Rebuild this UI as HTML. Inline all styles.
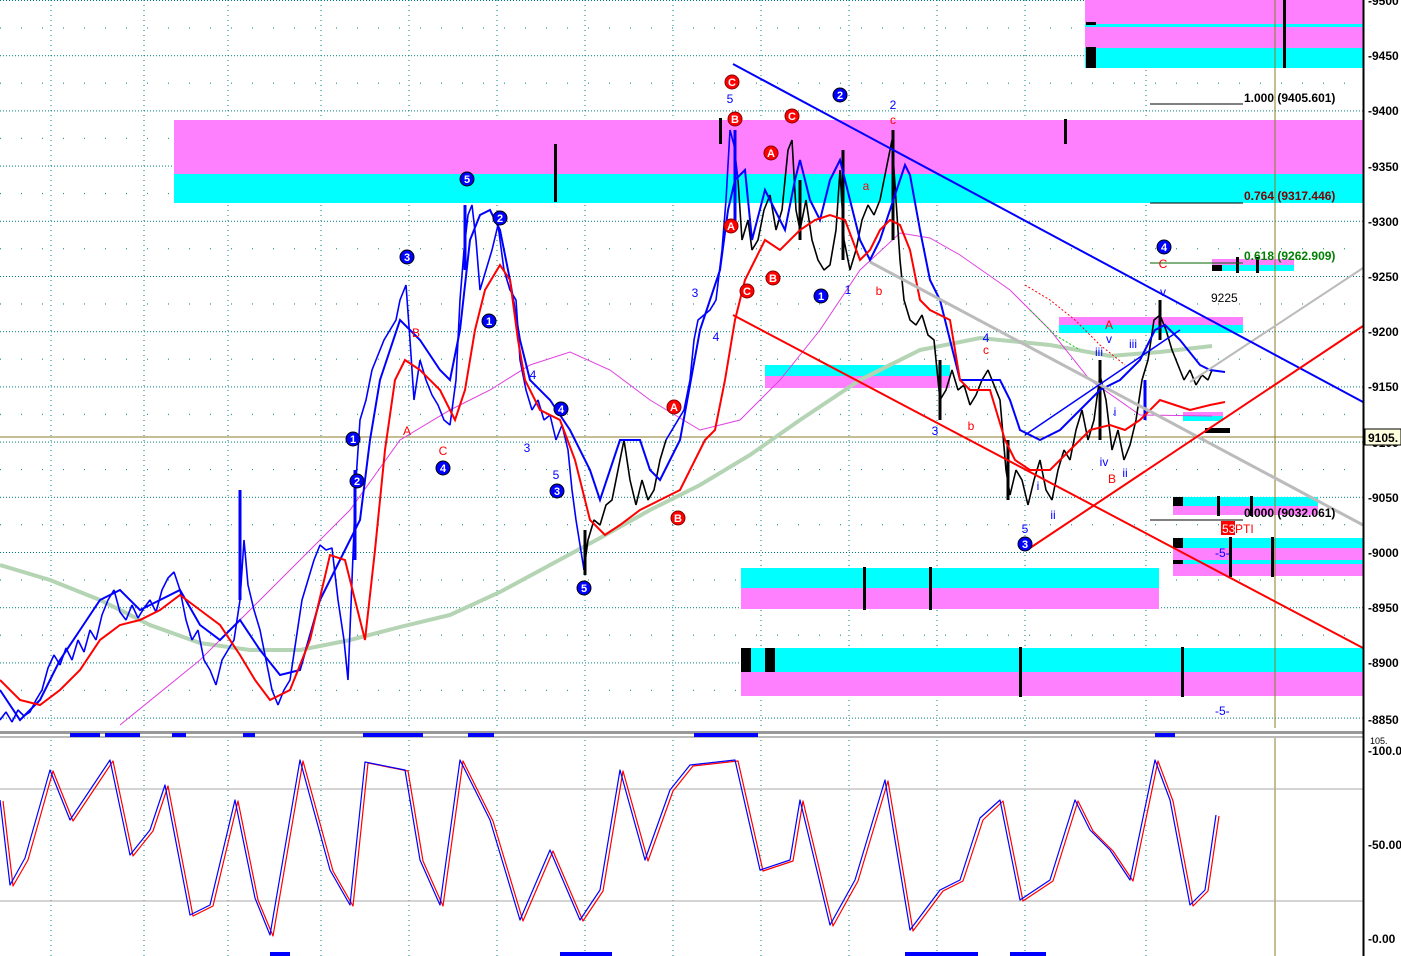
<!DOCTYPE html>
<html><head><meta charset="utf-8"><style>
html,body{margin:0;padding:0;background:#fff;overflow:hidden}
svg{display:block}
text{font-family:"Liberation Sans",sans-serif}
</style></head><body>
<svg width="1401" height="956" xmlns="http://www.w3.org/2000/svg">
<defs>
<pattern id="hg" x="0" y="0" width="1363" height="55.2" patternUnits="userSpaceOnUse">
<line x1="0" y1="0.5" x2="1363" y2="0.5" stroke="#008080" stroke-dasharray="1 2"/>
<line x1="0" y1="28" x2="1363" y2="28" stroke="#008080" stroke-dasharray="1 20"/>
</pattern>
</defs>
<rect width="1401" height="956" fill="#fff"/>
<rect x="0" y="0" width="1363" height="728" fill="url(#hg)"/>
<g stroke="#008080" stroke-dasharray="1 4">
<line x1="51" y1="0" x2="51" y2="956"/><line x1="144" y1="0" x2="144" y2="956"/><line x1="228" y1="0" x2="228" y2="956"/>
<line x1="321" y1="0" x2="321" y2="956"/><line x1="409" y1="0" x2="409" y2="956"/><line x1="497" y1="0" x2="497" y2="956"/>
<line x1="585" y1="0" x2="585" y2="956"/><line x1="673" y1="0" x2="673" y2="956"/><line x1="761" y1="0" x2="761" y2="956"/>
<line x1="849" y1="0" x2="849" y2="956"/><line x1="937" y1="0" x2="937" y2="956"/><line x1="1025" y1="0" x2="1025" y2="956"/>
<line x1="1146" y1="0" x2="1146" y2="956"/>
</g>
<!-- zones -->
<g>
<rect x="1085" y="0" width="278" height="24" fill="#ff80ff"/>
<rect x="1085" y="24" width="278" height="3" fill="#00ffff"/>
<rect x="1085" y="27" width="278" height="21" fill="#ff80ff"/>
<rect x="1085" y="48" width="278" height="20" fill="#00ffff"/>
<rect x="1086" y="47" width="10" height="21" fill="#000"/>
<rect x="1086" y="22" width="10" height="3" fill="#000"/>
<rect x="1283" y="0" width="3" height="68" fill="#000"/>
<rect x="174" y="120" width="1189" height="54" fill="#ff80ff"/>
<rect x="174" y="174" width="1189" height="29" fill="#00ffff"/>
<rect x="554" y="144" width="3" height="58" fill="#000"/>
<rect x="1064" y="119" width="3" height="25" fill="#000"/>
<rect x="719" y="118" width="3" height="26" fill="#000"/>
<rect x="765" y="365" width="185" height="11" fill="#00ffff"/>
<rect x="765" y="376" width="185" height="12" fill="#ff80ff"/>
<rect x="1059" y="317" width="184" height="8" fill="#ff80ff"/>
<rect x="1059" y="325" width="184" height="8" fill="#00ffff"/>
<rect x="1212" y="259" width="82" height="6" fill="#ff80ff"/>
<rect x="1212" y="265" width="82" height="6" fill="#00ffff"/>
<rect x="1212" y="265" width="10" height="6" fill="#000"/>
<rect x="1236" y="257" width="3" height="16" fill="#000"/>
<rect x="1256" y="257" width="3" height="16" fill="#000"/>
<rect x="1173" y="497" width="145" height="9" fill="#00ffff"/>
<rect x="1173" y="506" width="145" height="9" fill="#ff80ff"/>
<rect x="1173" y="497" width="10" height="9" fill="#000"/>
<rect x="1217" y="496" width="3" height="20" fill="#000"/>
<rect x="1250" y="496" width="3" height="20" fill="#000"/>
<rect x="1173" y="538" width="190" height="10" fill="#00ffff"/>
<rect x="1173" y="548" width="190" height="12" fill="#ff80ff"/>
<rect x="1173" y="560" width="190" height="4" fill="#00ffff"/>
<rect x="1173" y="564" width="190" height="12" fill="#ff80ff"/>
<rect x="1173" y="538" width="10" height="10" fill="#000"/>
<rect x="1173" y="560" width="10" height="4" fill="#000"/>
<rect x="1229" y="537" width="3" height="40" fill="#000"/>
<rect x="1271" y="537" width="3" height="40" fill="#000"/>
<rect x="1183" y="416" width="40" height="5" fill="#00ffff"/>
<rect x="1183" y="412" width="40" height="4" fill="#ff80ff"/>
<rect x="1205" y="428" width="25" height="5" fill="#000"/>
<rect x="741" y="568" width="418" height="20" fill="#00ffff"/>
<rect x="741" y="588" width="418" height="21" fill="#ff80ff"/>
<rect x="863" y="567" width="3" height="43" fill="#000"/>
<rect x="929" y="567" width="3" height="43" fill="#000"/>
<rect x="741" y="648" width="622" height="24" fill="#00ffff"/>
<rect x="741" y="672" width="622" height="24" fill="#ff80ff"/>
<rect x="741" y="648" width="10" height="24" fill="#000"/>
<rect x="765" y="648" width="10" height="24" fill="#000"/>
<rect x="1019" y="647" width="3" height="50" fill="#000"/>
<rect x="1181" y="647" width="3" height="50" fill="#000"/>
</g>
<line x1="1275" y1="0" x2="1275" y2="956" stroke="#8b7d2a" stroke-width="1"/>
<line x1="0" y1="437" x2="1363" y2="437" stroke="#8b7d2a" stroke-width="1"/>
<!-- MAs -->
<polyline points="0,565 50,580 100,600 150,625 200,643 250,650 300,650 350,640 400,627 450,615 500,592 550,565 600,538 650,510 700,485 750,455 800,420 860,380 920,350 980,338 1050,345 1110,356 1160,352 1212,346" fill="none" stroke="#b4d4b4" stroke-width="4"/>
<polyline points="120,725 200,660 250,610 300,560 350,510 400,440 450,410 490,390 530,365 570,352 610,370 650,400 700,430 740,420 780,380 820,330 860,270 900,233 930,238 960,255 1010,290 1050,330 1090,380 1140,415 1212,416" fill="none" stroke="#e040e0" stroke-width="1"/>
<polyline points="1025,285 1050,300 1075,320 1100,345 1125,365" fill="none" stroke="#f00" stroke-dasharray="2 2"/>
<polyline points="1030,310 1055,335 1080,350" fill="none" stroke="#0c0" stroke-dasharray="2 2"/>
<!-- price -->
<g fill="none" stroke-width="1.6" stroke-linejoin="bevel">
<polyline stroke="#0000ff" points="0,720 6,712 12,722 18,710 24,716 30,712 36,700 42,690 48,668 54,655 60,665 66,648 72,660 78,640 84,652 90,630 96,640 102,615 108,600 114,590 120,612 126,620 132,605 138,618 144,608 150,600 156,612 162,590 168,578 174,572 180,590 186,620 192,640 198,630 204,660 210,670 216,685 222,660 228,650 234,640 240,600 244,540 248,585 254,610 260,630 266,660 272,690 278,705 284,690 290,680 296,640 302,600 308,580 314,560 320,545 326,550 332,548 338,600 344,640 348,680 352,580 356,480 360,420 366,400 372,370 378,355 384,340 390,330 396,320 400,300 406,285 410,340 414,400 420,360 426,380 432,395 438,405 444,420 450,425 456,380 460,300 464,250 468,215 472,205 476,240 480,290 486,270 492,250 498,225 504,270 510,290 516,300 520,360 526,390 532,410 538,400 544,420 550,415 556,440 562,425 568,450 572,490 576,520 580,545 584,570"/>
<polyline stroke="#000" points="584,570 588,540 594,520 600,525 606,505 612,500 618,470 624,440 630,480 636,505 642,480 648,500 654,490 660,460 666,440"/>
<polyline stroke="#0000ff" points="666,440 672,430 678,420 684,410 690,380 694,340 698,320 704,315 710,310 716,300 722,250 726,200 730,130 734,145 738,180"/>
<polyline stroke="#000" points="738,180 742,240 748,220 752,250 758,240 764,210 770,195 776,230 782,210 788,150 792,140 796,210 800,230 806,200 812,240 818,260 824,270 830,265 836,230 840,170 844,240 850,270 856,250 862,220 868,205 874,215 880,200 886,170 892,140 896,200 900,260 904,300 910,320 916,325 922,315 928,335 934,340 940,400 946,390 952,370 958,390 964,385 970,405 976,395 982,380 988,370 994,385 1000,400 1006,470 1010,495 1016,470 1022,480 1028,505 1034,480 1040,460 1046,490 1052,500 1058,470 1064,450 1070,460 1076,430 1082,410 1088,440 1094,420 1100,375 1106,400 1112,450 1118,430 1124,460 1130,445 1136,420 1142,380 1148,360 1154,320 1160,315 1166,330 1172,350 1178,365 1184,380 1190,370 1196,385 1202,375 1208,380 1212,370"/>
</g>
<g stroke-width="3">
<line x1="240" y1="490" x2="240" y2="600" stroke="#00f"/><line x1="355" y1="470" x2="355" y2="560" stroke="#00f"/>
<line x1="465" y1="205" x2="465" y2="270" stroke="#00f"/><line x1="585" y1="530" x2="585" y2="575" stroke="#000"/>
<line x1="735" y1="130" x2="735" y2="230" stroke="#00f"/><line x1="800" y1="180" x2="800" y2="240" stroke="#000"/>
<line x1="843" y1="150" x2="843" y2="260" stroke="#000"/><line x1="893" y1="130" x2="893" y2="240" stroke="#000"/>
<line x1="940" y1="360" x2="940" y2="420" stroke="#000"/><line x1="1008" y1="440" x2="1008" y2="500" stroke="#000"/>
<line x1="1100" y1="360" x2="1100" y2="440" stroke="#000"/><line x1="1160" y1="300" x2="1160" y2="340" stroke="#000"/>
<line x1="1145" y1="380" x2="1145" y2="420" stroke="#00f"/>
</g>
<polyline fill="none" stroke="#0000ff" stroke-width="2" points="0,690 20,720 40,700 60,660 80,630 100,600 120,590 140,610 160,600 180,590 200,625 220,640 240,620 260,650 280,675 300,670 320,600 340,560 360,520 370,440 380,380 400,320 420,340 440,370 450,380 460,330 470,240 480,215 490,210 500,230 510,280 520,340 530,380 550,400 570,430 590,470 600,500 610,470 620,440 640,440 650,470 660,480 680,440 700,330 710,300 720,270 728,210 735,180 745,170 752,240 765,190 775,210 785,230 795,180 800,160 810,200 820,220 830,180 840,160 850,200 860,240 870,260 880,240 890,210 900,180 905,165 910,175 920,230 930,280 940,300 950,340 960,380 980,380 1000,380 1010,400 1020,430 1040,440 1060,430 1080,410 1100,390 1120,380 1140,360 1155,330 1165,325 1180,340 1200,365 1210,370 1225,372"/>
<polyline fill="none" stroke="#ff0000" stroke-width="2" points="0,680 20,700 40,705 60,690 80,670 100,640 120,625 140,620 160,610 180,595 200,610 220,625 240,655 255,680 270,700 290,690 310,640 330,555 345,560 355,600 365,640 375,550 385,450 395,380 405,360 420,370 440,390 455,420 465,390 475,330 485,290 500,265 510,280 518,340 525,380 540,410 560,420 575,460 590,520 605,535 620,525 640,510 660,500 680,490 695,460 705,440 715,430 725,380 735,320 745,280 755,260 765,240 780,250 800,230 815,220 830,215 845,220 860,260 870,250 880,230 890,220 900,225 910,250 920,300 930,310 950,320 960,380 970,390 990,390 1005,440 1015,460 1030,470 1050,470 1070,450 1090,430 1110,425 1125,430 1140,420 1160,400 1175,405 1190,410 1210,405 1225,402"/>
<!-- trendlines -->
<g fill="none" stroke-width="2">
<line x1="870" y1="262" x2="1363" y2="525" stroke="#bbb" stroke-width="3"/>
<line x1="1190" y1="382" x2="1363" y2="268" stroke="#bbb" stroke-width="2"/>
<line x1="733" y1="64" x2="1363" y2="402" stroke="#0000ff"/>
<line x1="733" y1="315" x2="1363" y2="648" stroke="#ff0000"/>
<line x1="1030" y1="548" x2="1363" y2="326" stroke="#ff0000"/>
<line x1="1025" y1="435" x2="1180" y2="330" stroke="#0000ff" stroke-width="1.5"/>
<line x1="1150" y1="104" x2="1243" y2="104" stroke="#000" stroke-width="1"/>
<line x1="1150" y1="203" x2="1243" y2="203" stroke="#000" stroke-width="1"/>
<line x1="1150" y1="263" x2="1243" y2="263" stroke="#006400" stroke-width="1"/>
<line x1="1150" y1="520" x2="1243" y2="520" stroke="#000" stroke-width="1"/>
</g>
<g font-size="12" font-weight="bold">
<text x="1244" y="102" fill="#000">1.000 (9405.601)</text>
<text x="1244" y="200" fill="#800000">0.764 (9317.446)</text>
<text x="1244" y="260" fill="#008000">0.618 (9262.909)</text>
<text x="1244" y="517" fill="#000">0.000 (9032.061)</text>
<text x="1211" y="302" fill="#000" font-weight="normal">9225</text>
<rect x="1221" y="521" width="14" height="14" fill="#f00"/>
<text x="1222" y="533" fill="#fff" font-weight="normal">53</text>
<text x="1235" y="533" fill="#f00" font-weight="normal">PTI</text>
<text x="1215" y="557" fill="#00f" font-weight="normal">-5-</text>
<text x="1215" y="715" fill="#00f" font-weight="normal">-5-</text>
</g>
<g font-size="12" text-anchor="middle" font-weight="bold">
<g fill="#0000ff" stroke="#000" stroke-width="1">
<circle cx="353" cy="439" r="7"/><circle cx="357" cy="481" r="7"/><circle cx="407" cy="257" r="7"/>
<circle cx="467" cy="179" r="7"/><circle cx="500" cy="218" r="7"/><circle cx="489" cy="321" r="7"/>
<circle cx="443" cy="468" r="7"/><circle cx="561" cy="409" r="7"/><circle cx="557" cy="491" r="7"/>
<circle cx="584" cy="588" r="7"/><circle cx="840" cy="95" r="7"/><circle cx="821" cy="296" r="7"/>
<circle cx="1164" cy="247" r="7"/><circle cx="1025" cy="544" r="7"/>
</g>
<g fill="#fff" font-size="11">
<text x="353" y="443">1</text><text x="357" y="485">2</text><text x="407" y="261">3</text>
<text x="467" y="183">5</text><text x="500" y="222">2</text><text x="489" y="325">1</text>
<text x="443" y="472">4</text><text x="561" y="413">4</text><text x="557" y="495">3</text>
<text x="584" y="592">5</text><text x="840" y="99">2</text><text x="821" y="300">1</text>
<text x="1164" y="251">4</text><text x="1025" y="548">3</text>
</g>
<g fill="#f00" stroke="#800" stroke-width="1">
<circle cx="732" cy="82" r="7"/><circle cx="735" cy="119" r="7"/><circle cx="792" cy="116" r="7"/>
<circle cx="771" cy="153" r="7"/><circle cx="731" cy="226" r="7"/><circle cx="747" cy="291" r="7"/>
<circle cx="773" cy="278" r="7"/><circle cx="674" cy="407" r="7"/><circle cx="678" cy="518" r="7"/>
</g>
<g fill="#fff" font-size="11">
<text x="732" y="86">C</text><text x="735" y="123">B</text><text x="792" y="120">C</text>
<text x="771" y="157">A</text><text x="731" y="230">A</text><text x="747" y="295">C</text>
<text x="773" y="282">B</text><text x="674" y="411">A</text><text x="678" y="522">B</text>
</g>
<g fill="#00f" font-weight="normal">
<text x="730" y="103">5</text><text x="893" y="109">2</text><text x="695" y="297">3</text>
<text x="716" y="341">4</text><text x="527" y="452">3</text><text x="533" y="379">4</text>
<text x="556" y="479">5</text><text x="848" y="294">1</text><text x="935" y="435">3</text>
<text x="986" y="342">4</text><text x="1025" y="533">5</text><text x="1053" y="519">ii</text>
<text x="1099" y="356">iii</text><text x="1133" y="348">iii</text><text x="1109" y="343">v</text>
<text x="1104" y="466">iv</text><text x="1125" y="477">ii</text><text x="1163" y="296">v</text>
<text x="1038" y="490">i</text><text x="1115" y="416">i</text>
</g>
<g fill="#f00" font-weight="normal">
<text x="416" y="337">B</text><text x="407" y="435">A</text><text x="443" y="455">C</text>
<text x="893" y="124">c</text><text x="866" y="190">a</text><text x="879" y="295">b</text>
<text x="971" y="430">b</text><text x="986" y="354">c</text><text x="1109" y="329">A</text>
<text x="1112" y="483">B</text><text x="1163" y="268">C</text>
</g>
</g>
<!-- separator & lower pane -->
<rect x="0" y="728" width="1401" height="10" fill="#fff"/>
<rect x="0" y="731" width="1401" height="3" fill="#999"/>
<line x1="0" y1="737" x2="1401" y2="737" stroke="#777"/>
<g fill="#0000ff">
<rect x="70" y="733" width="30" height="4"/><rect x="105" y="733" width="35" height="4"/>
<rect x="172" y="733" width="14" height="4"/><rect x="243" y="733" width="12" height="4"/>
<rect x="363" y="733" width="60" height="4"/><rect x="468" y="733" width="26" height="4"/>
<rect x="694" y="733" width="64" height="4"/><rect x="1155" y="733" width="20" height="4"/>
<rect x="270" y="952" width="20" height="4"/><rect x="560" y="952" width="52" height="4"/>
<rect x="905" y="952" width="73" height="4"/><rect x="1010" y="952" width="36" height="4"/>
</g>
<line x1="0" y1="789" x2="1363" y2="789" stroke="#aaa"/>
<line x1="0" y1="901" x2="1363" y2="901" stroke="#aaa"/>
<polyline fill="none" stroke="#f00" stroke-width="1.2" stroke-linejoin="round" points="3,801 13,886 28,860 53,771 73,821 93,791 113,761 133,856 153,831 168,786 193,916 213,906 238,801 258,900 273,936 303,761 333,871 353,906 368,763 408,771 423,861 443,906 463,761 493,821 523,921 553,851 583,921 603,891 623,771 648,861 673,791 693,766 738,761 763,871 793,861 803,801 833,926 858,881 888,781 913,931 943,891 963,881 983,820 1003,801 1023,901 1053,881 1078,801 1093,831 1113,851 1133,881 1158,761 1173,801 1193,906 1208,891 1219,816"/>
<polyline fill="none" stroke="#00f" stroke-width="1.2" stroke-linejoin="round" points="0,800 10,885 25,858 50,770 70,820 90,790 110,760 130,855 150,830 165,785 190,915 210,905 235,800 255,898 270,935 300,760 330,870 350,905 365,762 405,770 420,860 440,905 460,760 490,820 520,920 550,850 580,920 600,890 620,770 645,860 670,790 690,765 735,760 760,870 790,860 800,800 830,925 855,880 885,780 910,930 940,890 960,880 980,818 1000,800 1020,900 1050,880 1075,800 1090,830 1110,850 1130,880 1155,760 1170,800 1190,905 1205,890 1216,815"/>
<!-- right axis -->
<rect x="1364" y="0" width="37" height="956" fill="#fff"/>
<line x1="1363.5" y1="0" x2="1363.5" y2="956" stroke="#000" stroke-width="2"/>
<g font-size="12" font-weight="bold" fill="#000">
<text x="1368" y="5">-9500</text>
<text x="1368" y="60">-9450</text><text x="1368" y="115">-9400</text><text x="1368" y="171">-9350</text>
<text x="1368" y="226">-9300</text><text x="1368" y="281">-9250</text><text x="1368" y="336">-9200</text>
<text x="1368" y="391">-9150</text><text x="1368" y="447">-9100</text><text x="1368" y="502">-9050</text>
<text x="1368" y="557">-9000</text><text x="1368" y="612">-8950</text><text x="1368" y="667">-8900</text>
<text x="1368" y="724">-8850</text>
<text x="1368" y="755">-100.0</text><text x="1368" y="849">-50.00</text><text x="1368" y="943">-0.00</text>
</g>
<rect x="1365" y="429" width="36" height="16" fill="#ffffe0" stroke="#000"/>
<text x="1368" y="442" font-size="12" font-weight="bold">9105.</text>
<rect x="1365" y="737" width="36" height="8" fill="#fff"/>
<text x="1370" y="744" font-size="9">105.</text>
</svg>
</body></html>
